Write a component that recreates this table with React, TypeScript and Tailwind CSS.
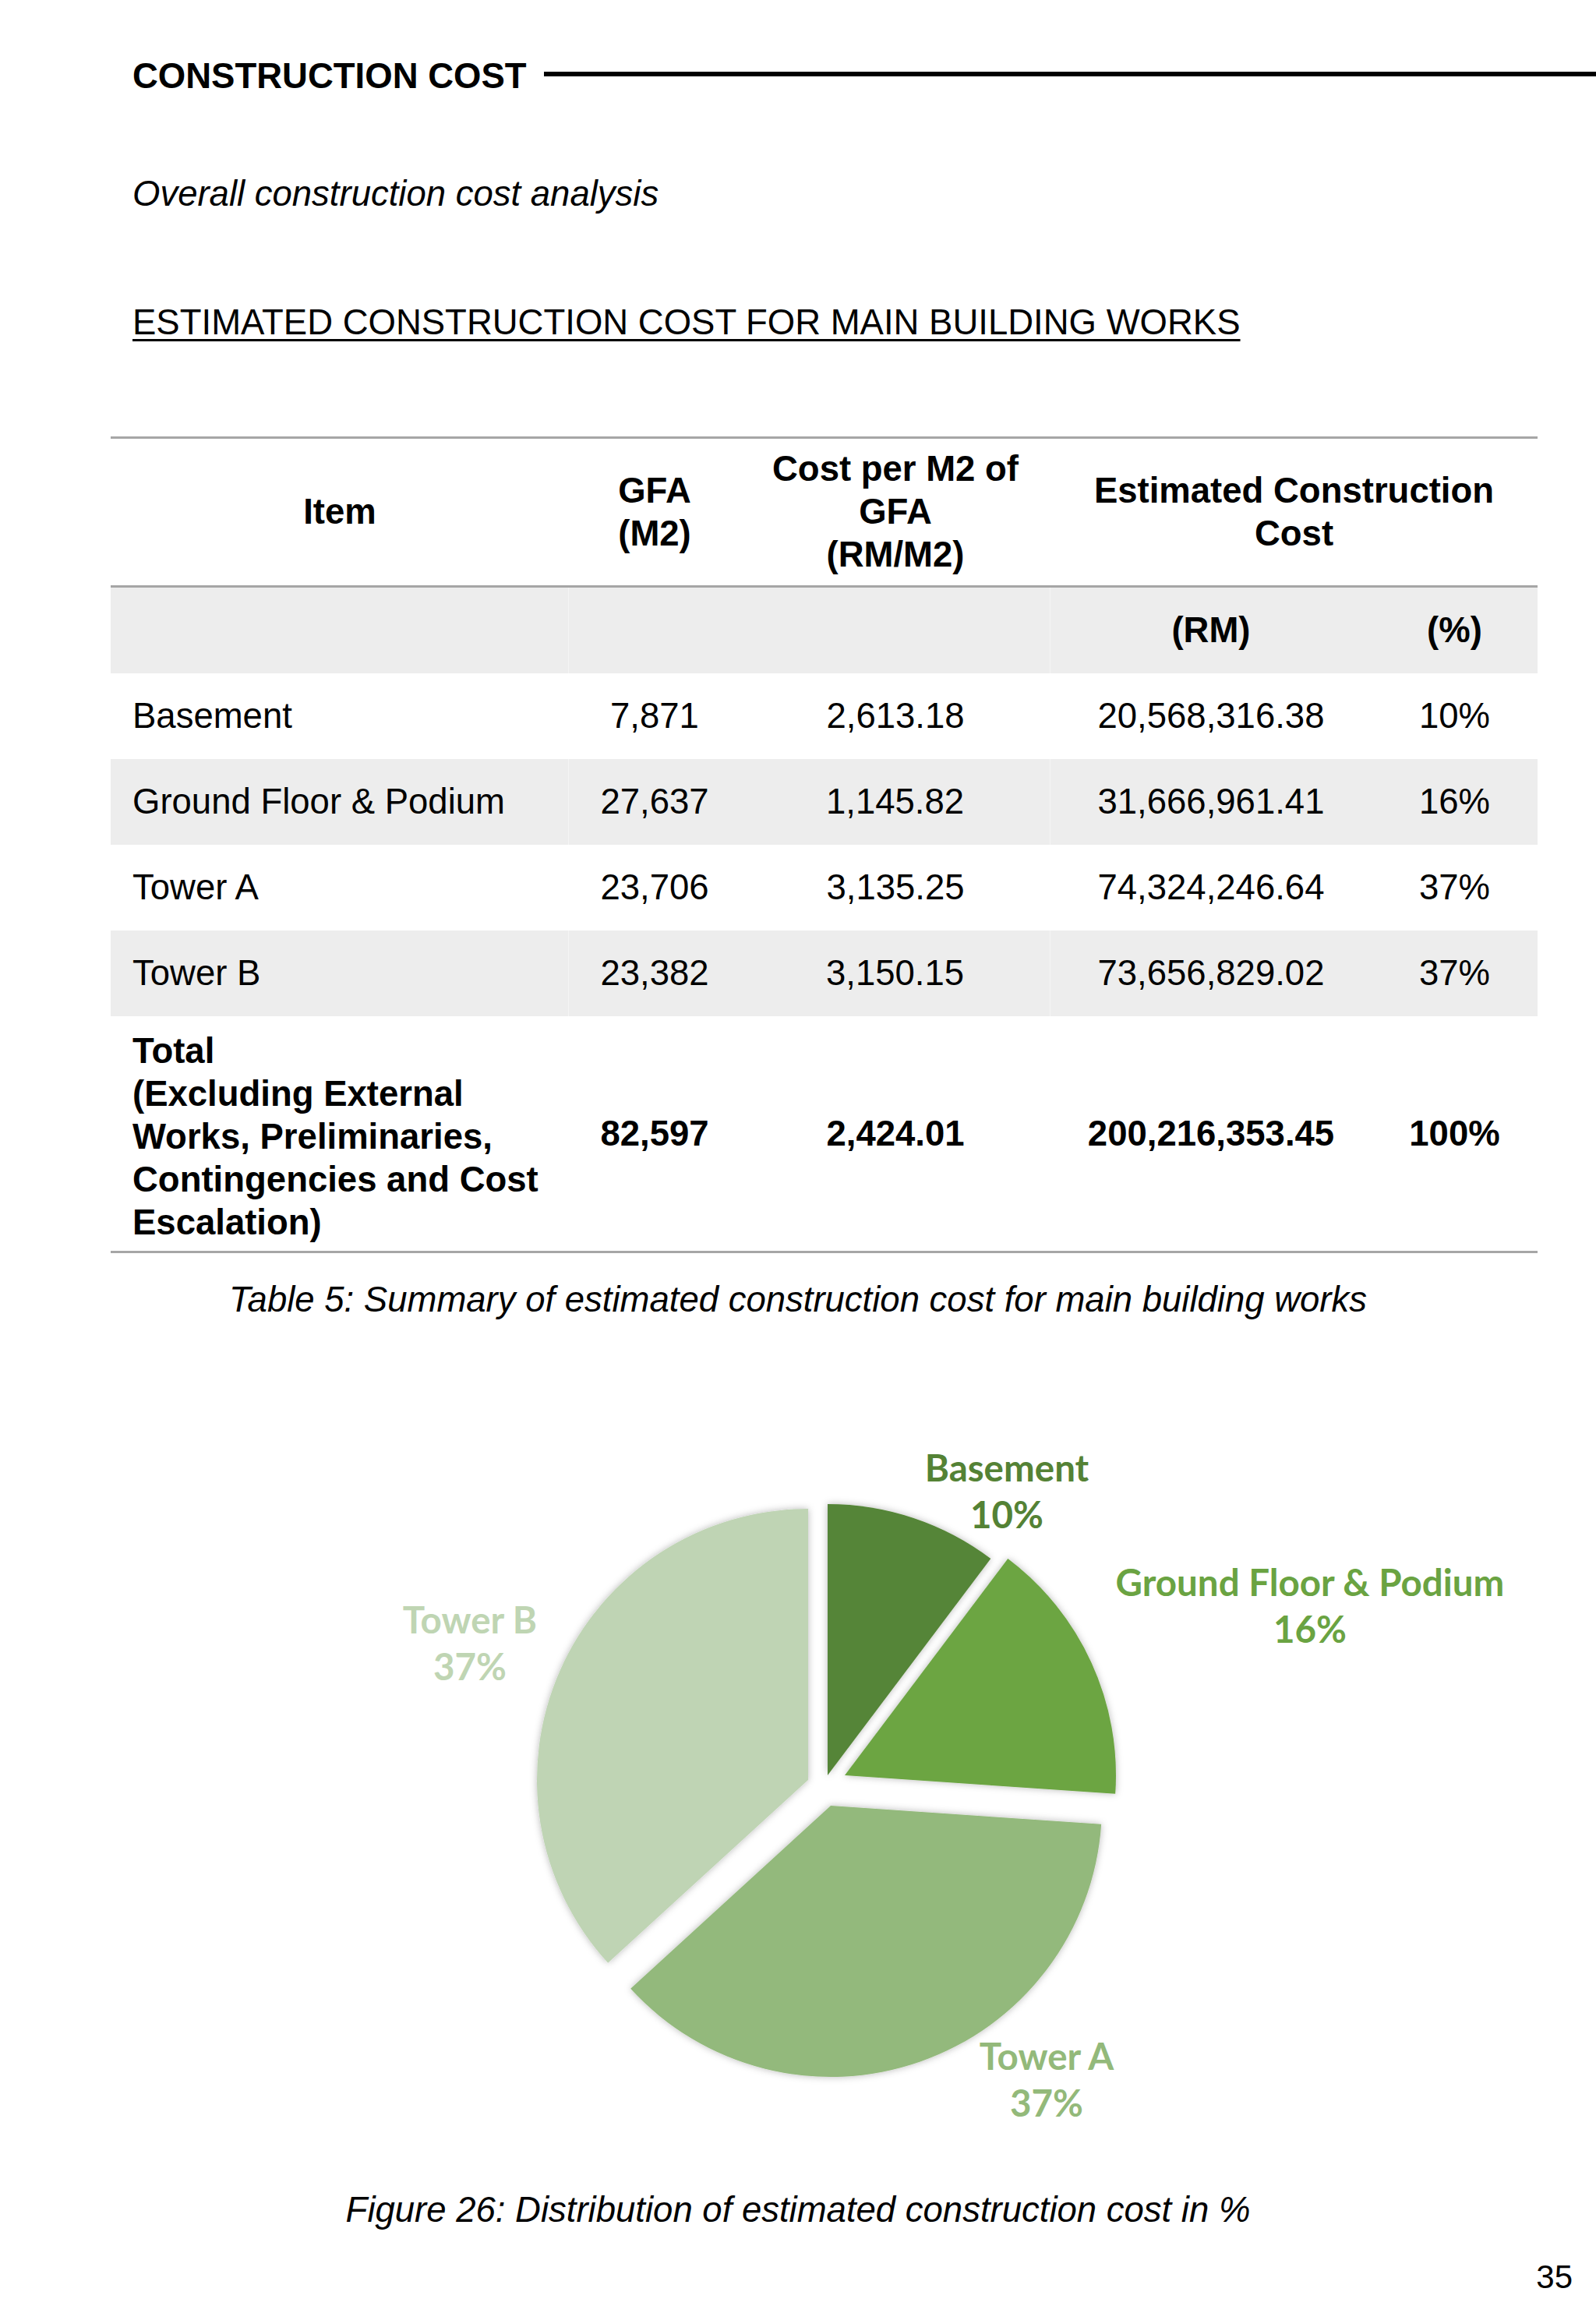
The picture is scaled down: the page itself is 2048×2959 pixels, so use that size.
const rows = [
  { item: "Basement", gfa: "7,871", rate: "2,613.18", cost: "20,568,316.38", pct: "10%", shade: false },
  { item: "Ground Floor & Podium", gfa: "27,637", rate: "1,145.82", cost: "31,666,961.41", pct: "16%", shade: true },
  { item: "Tower A", gfa: "23,706", rate: "3,135.25", cost: "74,324,246.64", pct: "37%", shade: false },
  { item: "Tower B", gfa: "23,382", rate: "3,150.15", cost: "73,656,829.02", pct: "37%", shade: true },
];

const cols = "grid grid-cols-[588px_220px_398px_412px_213px]";

// slices: apex point, start/end angle (deg, clockwise from 12 o'clock)
const R = 348;
const slices = [
  { ax: 1062, ay: 2276, a0: 0, a1: 36.98, fill: "#558537" },
  { ax: 1084, ay: 2276, a0: 36.98, a1: 93.92, fill: "#6ca542" },
  { ax: 1066, ay: 2315, a0: 93.92, a1: 227.56, fill: "#93b97b" },
  { ax: 1037, ay: 2282, a0: 227.56, a1: 360, fill: "#bfd4b4" },
];

function slicePath(s: { ax: number; ay: number; a0: number; a1: number }) {
  const rad = (d: number) => (d * Math.PI) / 180;
  const x0 = s.ax + R * Math.sin(rad(s.a0));
  const y0 = s.ay - R * Math.cos(rad(s.a0));
  const x1 = s.ax + R * Math.sin(rad(s.a1));
  const y1 = s.ay - R * Math.cos(rad(s.a1));
  const large = s.a1 - s.a0 > 180 ? 1 : 0;
  return `M${s.ax} ${s.ay} L${x0} ${y0} A${R} ${R} 0 ${large} 1 ${x1} ${y1} Z`;
}

const labels = [
  { x: 1292, y: 1899, name: "Basement", pct: "10%", color: "#548235" },
  { x: 1681, y: 2046, name: "Ground Floor & Podium", pct: "16%", color: "#6aa342" },
  { x: 603, y: 2094, name: "Tower B", pct: "37%", color: "#bfd5b3" },
  { x: 1343, y: 2654, name: "Tower A", pct: "37%", color: "#93b97a" },
];

function PieChart() {
  return (
    <svg width="2048" height="1123" viewBox="0 1688 2048 1123" className="block">
      <defs>
        <filter id="soft" x="-20%" y="-20%" width="140%" height="140%">
          <feDropShadow dx="0" dy="0" stdDeviation="5" floodColor="#000" floodOpacity="0.28" />
        </filter>
      </defs>
      {slices.map((s, i) => (
        <path key={i} d={slicePath(s)} fill={s.fill} filter="url(#soft)" />
      ))}
      {labels.map((l) => (
        <text
          key={l.name}
          x={l.x}
          textAnchor="middle"
          fill={l.color}
          fontFamily="Lato, 'Open Sans', sans-serif"
          fontWeight="700"
          fontSize="47.5"
        >
          <tspan x={l.x} y={l.y}>{l.name}</tspan>
          <tspan x={l.x} y={l.y + 60}>{l.pct}</tspan>
        </text>
      ))}
    </svg>
  );
}

export default function App() {
  return (
    <div className="w-[2048px] min-h-[2959px] bg-white text-black font-['Liberation_Sans',Arial,sans-serif] text-[45.5px] leading-none">
      <div className="pt-[75px] pl-[170px] flex items-center">
        <h1 className="font-bold text-[45.5px] leading-none whitespace-nowrap">CONSTRUCTION COST</h1>
        <div className="flex-1 h-[6px] bg-black ml-[22px] mt-[-6px]" />
      </div>

      <p className="mt-[105px] pl-[170px] italic">Overall construction cost analysis</p>

      <h2 className="mt-[120px] pl-[170px] underline decoration-[3px] underline-offset-[6px]">
        ESTIMATED CONSTRUCTION COST FOR MAIN BUILDING WORKS
      </h2>

      <div className="mt-[123px] ml-[142px] w-[1831px] border-t-[3px] border-b-[3px] border-[#a6a6a6]">
        <div className={`${cols} h-[191px] items-center text-center font-bold leading-[55px] border-b-[3px] border-[#a6a6a6]`}>
          <div>Item</div>
          <div>
            GFA
            <br />
            (M2)
          </div>
          <div>
            Cost per M2 of
            <br />
            GFA
            <br />
            (RM/M2)
          </div>
          <div className="col-span-2">
            Estimated Construction
            <br />
            Cost
          </div>
        </div>

        <div className={`${cols} h-[110px] items-stretch bg-[#ededed] font-bold text-center`}>
          <div className="border-r border-[#f5f5f5]" />
          <div />
          <div className="border-r border-[#f5f5f5]" />
          <div className="flex items-center justify-center">(RM)</div>
          <div className="flex items-center justify-center">(%)</div>
        </div>

        {rows.map((r) => (
          <div
            key={r.item}
            className={`${cols} h-[110px] items-stretch text-center ${r.shade ? "bg-[#ededed]" : "bg-white"}`}
          >
            <div className={`flex items-center pl-[28px] text-left ${r.shade ? "border-r border-[#f5f5f5]" : ""}`}>
              {r.item}
            </div>
            <div className="flex items-center justify-center">{r.gfa}</div>
            <div className={`flex items-center justify-center ${r.shade ? "border-r border-[#f5f5f5]" : ""}`}>
              {r.rate}
            </div>
            <div className="flex items-center justify-center">{r.cost}</div>
            <div className="flex items-center justify-center">{r.pct}</div>
          </div>
        ))}

        <div className={`${cols} h-[301px] items-center text-center font-bold leading-[55px]`}>
          <div className="self-start pt-[17px] pl-[28px] text-left">
            Total
            <br />
            (Excluding External
            <br />
            Works, Preliminaries,
            <br />
            Contingencies and Cost
            <br />
            Escalation)
          </div>
          <div>82,597</div>
          <div>2,424.01</div>
          <div>200,216,353.45</div>
          <div>100%</div>
        </div>
      </div>

      <p className="mt-[37px] text-center italic">
        Table 5: Summary of estimated construction cost for main building works
      </p>

      <PieChart />

      <p className="text-center italic">Figure 26: Distribution of estimated construction cost in %</p>

      <div className="mt-[42px] pr-[30px] text-right text-[42px]">35</div>
    </div>
  );
}
